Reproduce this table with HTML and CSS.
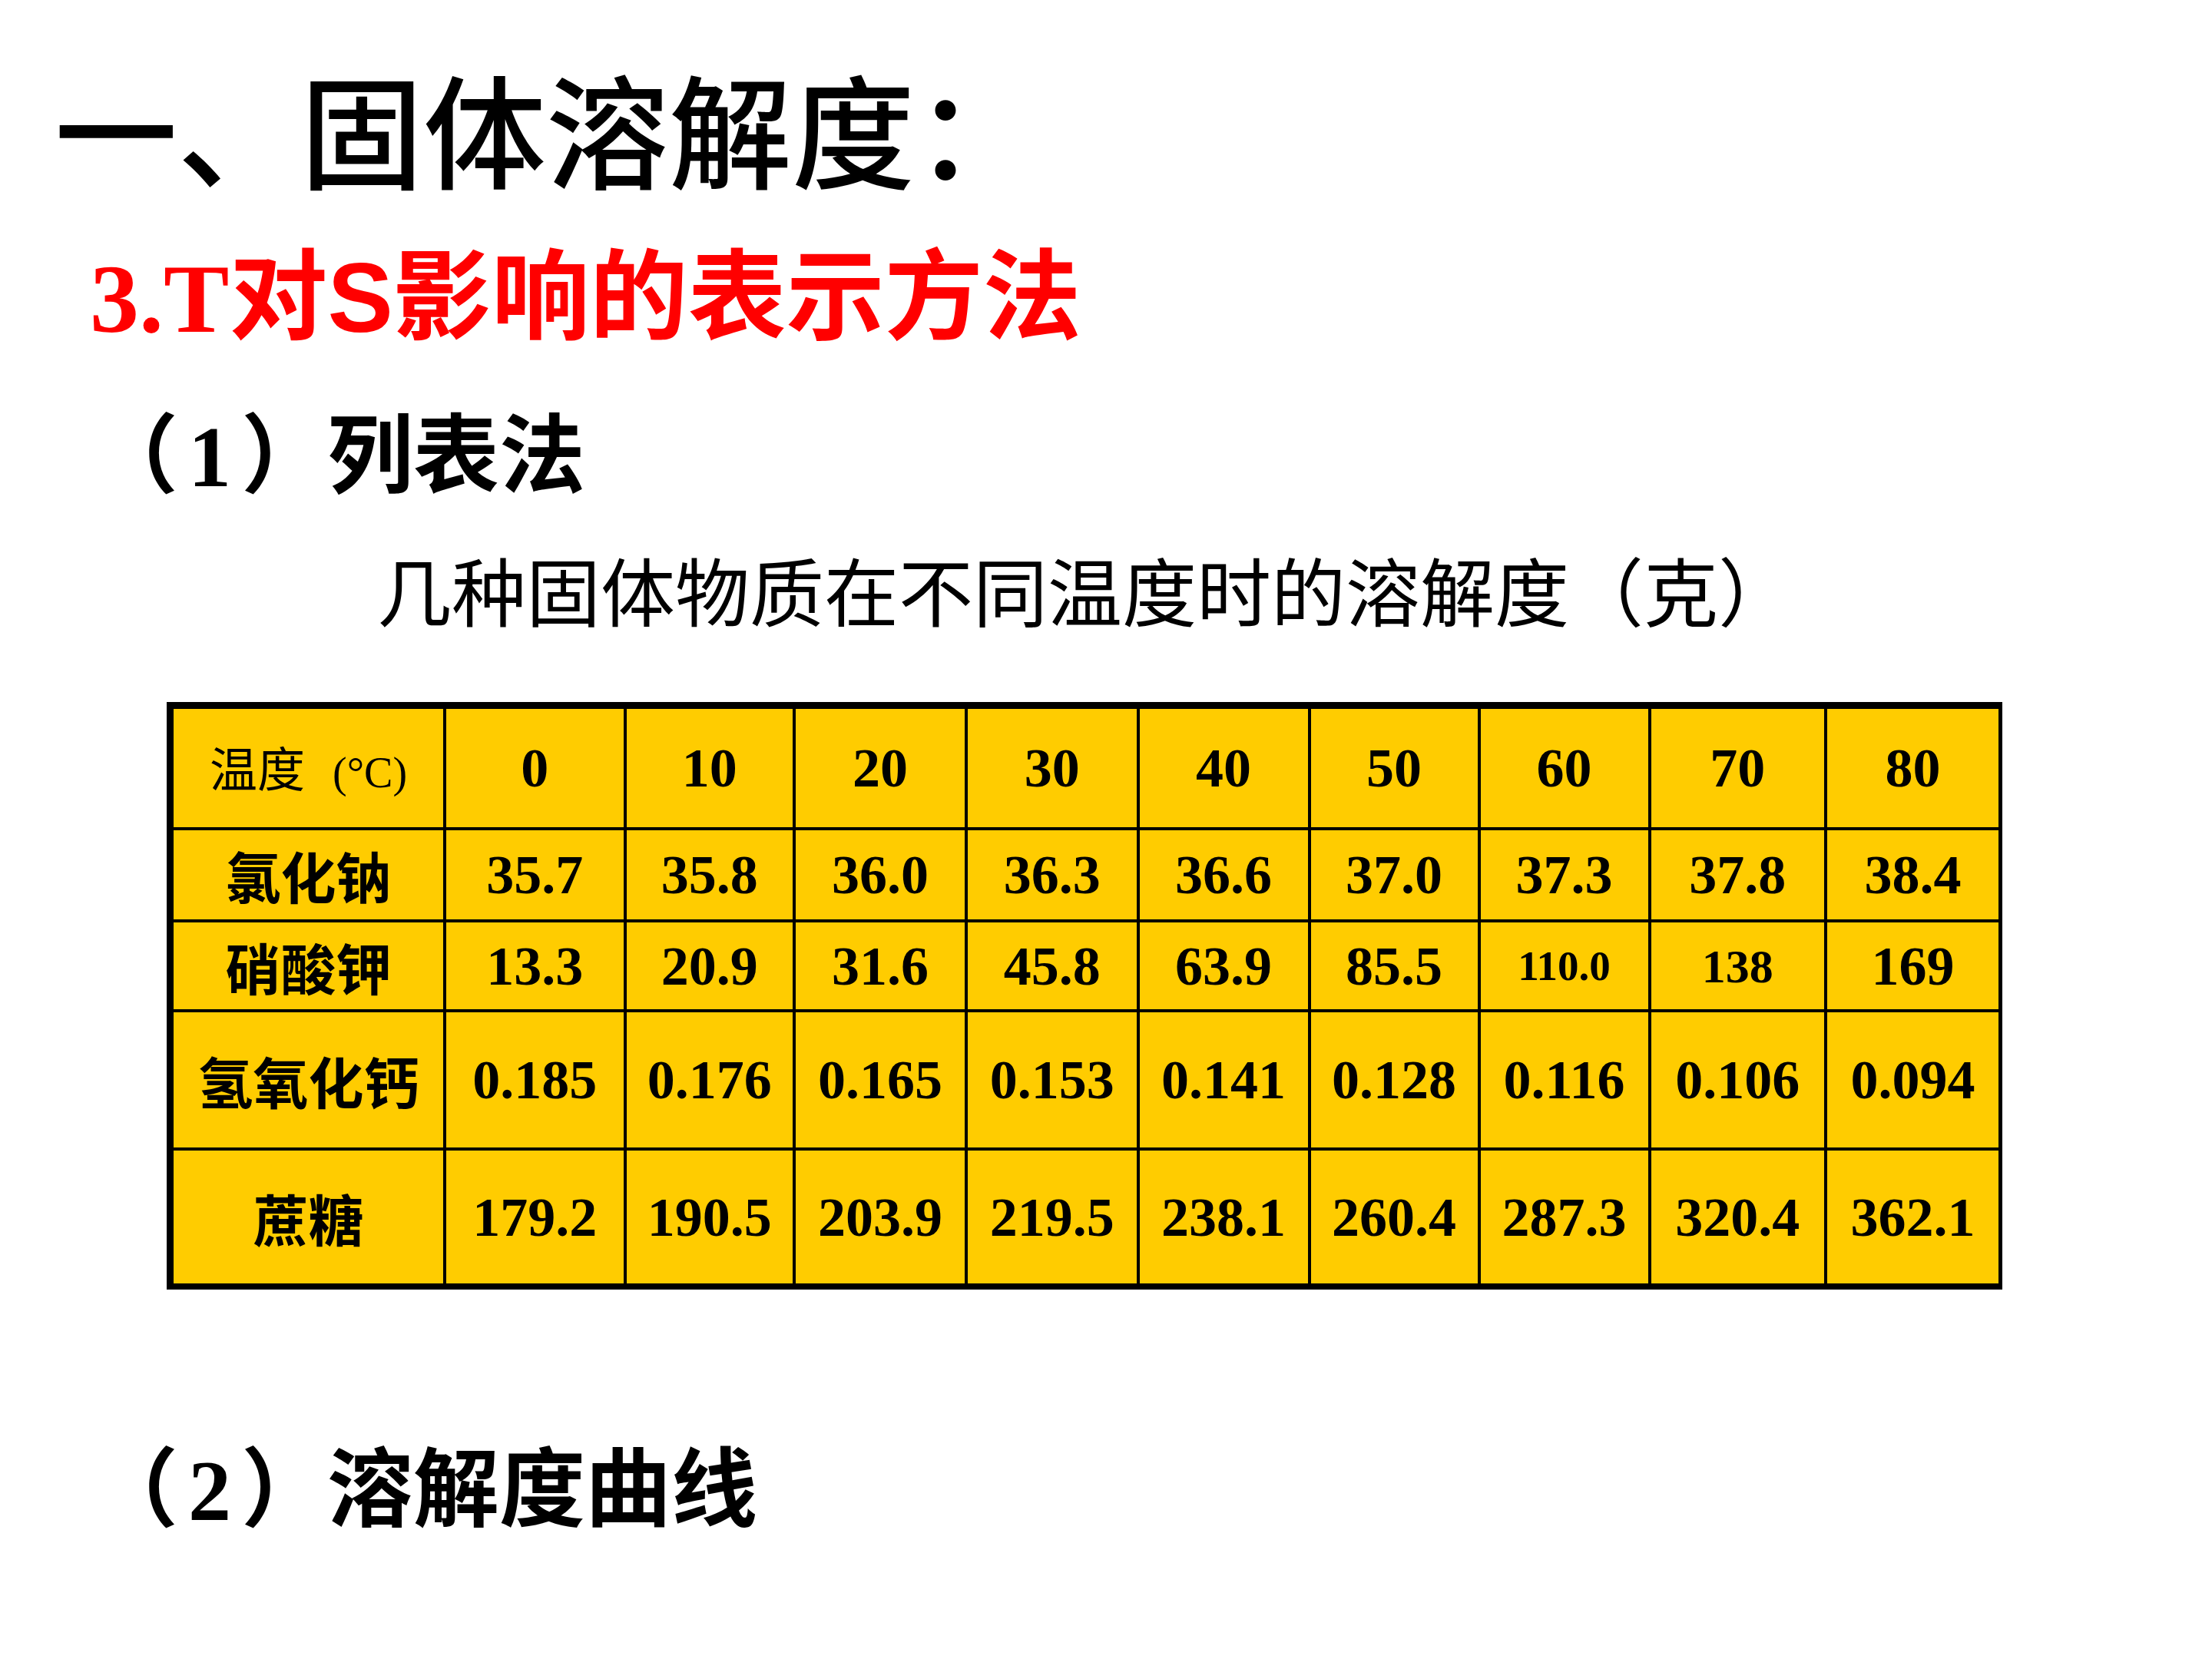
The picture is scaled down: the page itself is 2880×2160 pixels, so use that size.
FILE: index.html
```html
<!DOCTYPE html>
<html lang="zh-CN">
<head>
<meta charset="utf-8">
<title>固体溶解度</title>
<link rel="stylesheet" href="styles.css">
</head>
<body>
<main class="slide">
  <h1 class="title">一、固体溶解度：</h1>
  <h2 class="subtitle">3.T对<span class="latin-s">S</span>影响的表示方法</h2>
  <h3 class="method">（<span class="num">1</span>）列表法</h3>
  <p class="caption">几种固体物质在不同温度时的溶解度（克）</p>
  <table class="sol">
    <colgroup>
      <col class="c-label"><col class="c0"><col class="c10"><col class="c20"><col class="c30">
      <col class="c40"><col class="c50"><col class="c60"><col class="c70"><col class="c80">
    </colgroup>
    <tr class="r-head">
      <th class="head-label">温度<span class="unit">(°C)</span></th>
      <td>0</td><td>10</td><td>20</td><td>30</td><td>40</td><td>50</td><td>60</td><td>70</td><td>80</td>
    </tr>
    <tr class="r-a">
      <th>氯化钠</th>
      <td>35.7</td><td>35.8</td><td>36.0</td><td>36.3</td><td>36.6</td><td>37.0</td><td>37.3</td><td>37.8</td><td>38.4</td>
    </tr>
    <tr class="r-b">
      <th>硝酸钾</th>
      <td>13.3</td><td>20.9</td><td>31.6</td><td>45.8</td><td>63.9</td><td>85.5</td><td class="sm-1">110.0</td><td class="sm-2">138</td><td>169</td>
    </tr>
    <tr class="r-c">
      <th>氢氧化钙</th>
      <td>0.185</td><td>0.176</td><td>0.165</td><td>0.153</td><td>0.141</td><td>0.128</td><td>0.116</td><td>0.106</td><td>0.094</td>
    </tr>
    <tr class="r-d">
      <th>蔗糖</th>
      <td>179.2</td><td>190.5</td><td>203.9</td><td>219.5</td><td>238.1</td><td>260.4</td><td>287.3</td><td>320.4</td><td>362.1</td>
    </tr>
  </table>
  <h3 class="method method-2">（<span class="num">2</span>）溶解度曲线</h3>
</main>
</body>
</html>
```
FILE: styles.css
```css
html, body {
  margin: 0;
  padding: 0;
  background: #ffffff;
}

.slide {
  width: 2880px;
  height: 2160px;
  box-sizing: border-box;
  padding-top: 84px;
  display: flex;
  flex-direction: column;
  align-items: flex-start;
  font-family: "Noto Sans CJK SC", sans-serif;
  color: #000;
  overflow: hidden;
}

h1, h2, h3, p {
  margin: 0;
  font-weight: normal;
}

.title {
  font-size: 160px;
  line-height: 160px;
  font-weight: 500;
  margin-left: 71px;
  white-space: nowrap;
}

.subtitle {
  font-family: "Liberation Serif", "Noto Sans CJK SC", serif;
  font-size: 128px;
  line-height: 128px;
  font-weight: 700;
  color: #ff0000;
  margin: 80px 0 0 117px;
  white-space: nowrap;
}

.latin-s {
  font-family: "Liberation Sans", sans-serif;
}

.method {
  font-family: "Liberation Serif", "Noto Sans CJK SC", serif;
  font-size: 112px;
  line-height: 112px;
  font-weight: 700;
  margin: 86px 0 0 120px;
  white-space: nowrap;
}

.method .num {
  margin: 0 13px;
}

.method-2 {
  margin-top: 206px;
}

.caption {
  font-size: 97px;
  line-height: 97px;
  margin: 66px 0 0 491px;
  white-space: nowrap;
}

.sol {
  margin: 100px 0 0 217px;
  border-collapse: separate;
  border-spacing: 0;
  table-layout: fixed;
  box-sizing: border-box;
  width: 2390px;
  border-style: solid;
  border-color: #000;
  border-width: 9px 5px 8px 9px;
  background: #ffcc00;
}

.c-label { width: 355px; }
.c0 { width: 234.5px; }
.c10 { width: 220.5px; }
.c20 { width: 224px; }
.c30 { width: 223.5px; }
.c40 { width: 223px; }
.c50 { width: 221px; }
.c60 { width: 222px; }
.c70 { width: 229.5px; }
.c80 { width: 223px; }

.sol th,
.sol td {
  box-sizing: border-box;
  padding: 0;
  text-align: center;
  vertical-align: middle;
  border-right: 4px solid #000;
  border-bottom: 4px solid #000;
  line-height: 1;
  white-space: nowrap;
}

.sol tr > :last-child {
  border-right: 0;
}

.sol tr:last-child > * {
  border-bottom: 0;
}

.sol td {
  font-family: "Liberation Serif", serif;
  font-weight: 700;
  font-size: 72px;
}

.sol th {
  font-family: "Noto Sans CJK SC", sans-serif;
  font-weight: 700;
  font-size: 72px;
}

.sol th.head-label {
  font-weight: 400;
  font-size: 62px;
}

.unit {
  font-family: "Liberation Serif", serif;
  font-size: 56px;
  margin-left: 36px;
}

.sol td.sm-1 { font-size: 55px; }
.sol td.sm-2 { font-size: 62px; }

.r-head > * { height: 158px; }
.r-a > * { height: 120px; }
.r-b > * { height: 117px; }
.r-c > * { height: 180px; }
.r-d > * { height: 173px; }
```
